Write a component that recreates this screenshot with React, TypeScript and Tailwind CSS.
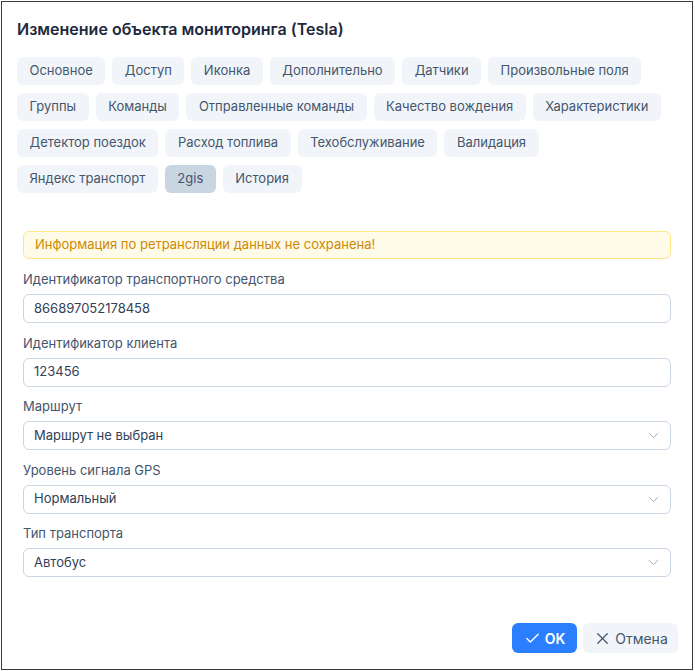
import { Check, ChevronDown, X } from 'lucide-react';

const tabRows: string[][] = [
  ['Основное', 'Доступ', 'Иконка', 'Дополнительно', 'Датчики', 'Произвольные поля'],
  ['Группы', 'Команды', 'Отправленные команды', 'Качество вождения', 'Характеристики'],
  ['Детектор поездок', 'Расход топлива', 'Техобслуживание', 'Валидация'],
  ['Яндекс транспорт', '2gis', 'История'],
];

function Field({ label, value, select }: { label: string; value: string; select?: boolean }) {
  return (
    <div className="flex flex-col">
      <label className="text-[13px] leading-5 text-slate-600 mb-[5px]">{label}</label>
      <div className="h-[29px] rounded-md border border-slate-300 flex items-center justify-between pl-[10px] pr-[8px] text-[13px] text-slate-700">
        <span>{value}</span>
        {select && <ChevronDown size={17} strokeWidth={1.25} className="text-slate-400" />}
      </div>
    </div>
  );
}

export default function App() {
  return (
    <div className="w-[692px] h-[669px] ml-px mt-px border border-[#3a3a3a] bg-white flex flex-col font-['Inter',sans-serif]">
      <div className="pt-[15px] px-[15px]">
        <h2 className="text-[16px] leading-6 font-semibold text-slate-800 m-0">
          Изменение объекта мониторинга (Tesla)
        </h2>
        <div className="mt-4 flex flex-col gap-2">
          {tabRows.map((row, i) => (
            <div key={i} className="flex gap-[7px]">
              {row.map((tab) => (
                <div
                  key={tab}
                  className={`h-7 px-[12.5px] rounded-md flex items-center text-[13px] text-slate-600 ${
                    tab === '2gis' ? 'bg-slate-300' : 'bg-slate-100'
                  }`}
                >
                  {tab}
                </div>
              ))}
            </div>
          ))}
        </div>
      </div>

      <div className="px-[21px] mt-[38px] flex flex-col">
        <div className="h-7 rounded-md border border-amber-200 bg-yellow-50 flex items-center px-[11px] text-[13px] text-yellow-600">
          Информация по ретрансляции данных не сохранена!
        </div>
        <div className="mt-[10px] flex flex-col gap-[9.5px]">
          <Field label="Идентификатор транспортного средства" value="866897052178458" />
          <Field label="Идентификатор клиента" value="123456" />
          <Field label="Маршрут" value="Маршрут не выбран" select />
          <Field label="Уровень сигнала GPS" value="Нормальный" select />
          <Field label="Тип транспорта" value="Автобус" select />
        </div>
      </div>

      <div className="mt-auto pb-4 pr-[14px] flex justify-end gap-[6px]">
        <button className="h-[30px] w-[65px] rounded-md bg-blue-500 text-white text-[14px] font-semibold flex items-center justify-center gap-1">
          <Check size={17} strokeWidth={2} />
          OK
        </button>
        <button className="h-[30px] w-[95px] rounded-md bg-slate-100 text-slate-600 text-[14px] flex items-center justify-center gap-[3px]">
          <X size={19} strokeWidth={1.5} />
          Отмена
        </button>
      </div>
    </div>
  );
}
